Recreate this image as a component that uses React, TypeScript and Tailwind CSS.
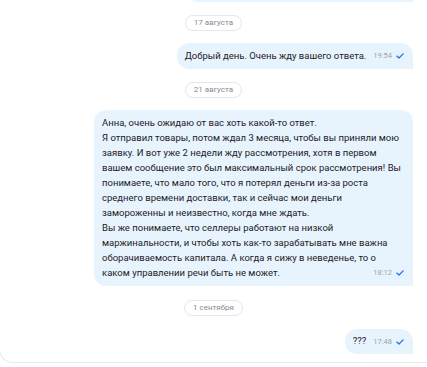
import React from 'react'

const Check = () => (
  <svg width="8" height="6" viewBox="0 0 8 6" className="shrink-0">
    <path d="M0.8 3.1 L3 5 L7.2 0.9" fill="none" stroke="#2272ef" strokeWidth="1.3" strokeLinecap="round" strokeLinejoin="round" />
  </svg>
)

const Time = ({ value }: { value: string }) => (
  <span className="flex items-center gap-[4px] shrink-0 text-[7.5px] leading-none text-[#9ea3ab]">
    {value}
    <Check />
  </span>
)

const DatePill = ({ label, className = '' }: { label: string; className?: string }) => (
  <div className={`self-center h-[16px] px-[8px] flex items-center rounded-full border border-[#e4e7ec] text-[8px] text-[#868b94] ${className}`}>
    {label}
  </div>
)

const longLines = [
  'Анна, очень ожидаю от вас хоть какой-то ответ.',
  'Я отправил товары, потом ждал 3 месяца, чтобы вы приняли мою',
  'заявку. И вот уже 2 недели жду рассмотрения, хотя в первом',
  'вашем сообщение это был максимальный срок рассмотрения! Вы',
  'понимаете, что мало того, что я потерял деньги из-за роста',
  'среднего времени доставки, так и сейчас мои деньги',
  'замороженны и неизвестно, когда мне ждать.',
  'Вы же понимаете, что селлеры работают на низкой',
  'маржинальности, и чтобы хоть как-то зарабатывать мне важна',
  'оборачиваемость капитала. А когда я сижу в неведенье, то о',
]

export default function App() {
  return (
    <div className="h-[367px] bg-white overflow-hidden" style={{ fontFamily: 'Roboto, "Noto Sans", sans-serif' }}>
      <div className="h-[363px] -ml-px border-b border-l border-[#e6e9f0] rounded-bl-[14px] overflow-hidden flex flex-col">
        {/* previous message, mostly scrolled away */}
        <div className="self-end mr-[14px] w-[225px] h-[20px] -mt-[18px] bg-[#e8f4fd] rounded-[12px] rounded-br-none" />

        <DatePill label="17 августа" className="mt-[13px]" />

        <div className="self-end mr-[14px] mt-[12px] h-[26px] pl-[8px] pr-[9px] flex items-center gap-[7px] bg-[#e8f4fd] rounded-[12px] rounded-br-none">
          <span className="text-[9.5px] text-[#1c2026] whitespace-nowrap">Добрый день. Очень жду вашего ответа.</span>
          <Time value="19:54" />
        </div>

        <DatePill label="21 августа" className="mt-[13px]" />

        <div className="self-end mr-[14px] mt-[12px] w-[319px] pl-[8px] pr-[9px] pt-[5px] pb-[6px] bg-[#e8f4fd] rounded-[12px] rounded-br-none text-[9.5px] leading-[15px] text-[#1c2026]">
          {longLines.map((line, i) => (
            <div key={i} className="whitespace-nowrap">{line}</div>
          ))}
          <div className="flex items-center justify-between">
            <span className="whitespace-nowrap">каком управлении речи быть не может.</span>
            <Time value="18:12" />
          </div>
        </div>

        <DatePill label="1 сентября" className="mt-[14px]" />

        <div className="self-end mr-[14px] mt-[13px] h-[25px] pl-[8px] pr-[9px] flex items-center gap-[7px] bg-[#e8f4fd] rounded-[12px] rounded-br-none">
          <span className="text-[9.5px] text-[#1c2026]">???</span>
          <Time value="17:48" />
        </div>
      </div>
    </div>
  )
}
